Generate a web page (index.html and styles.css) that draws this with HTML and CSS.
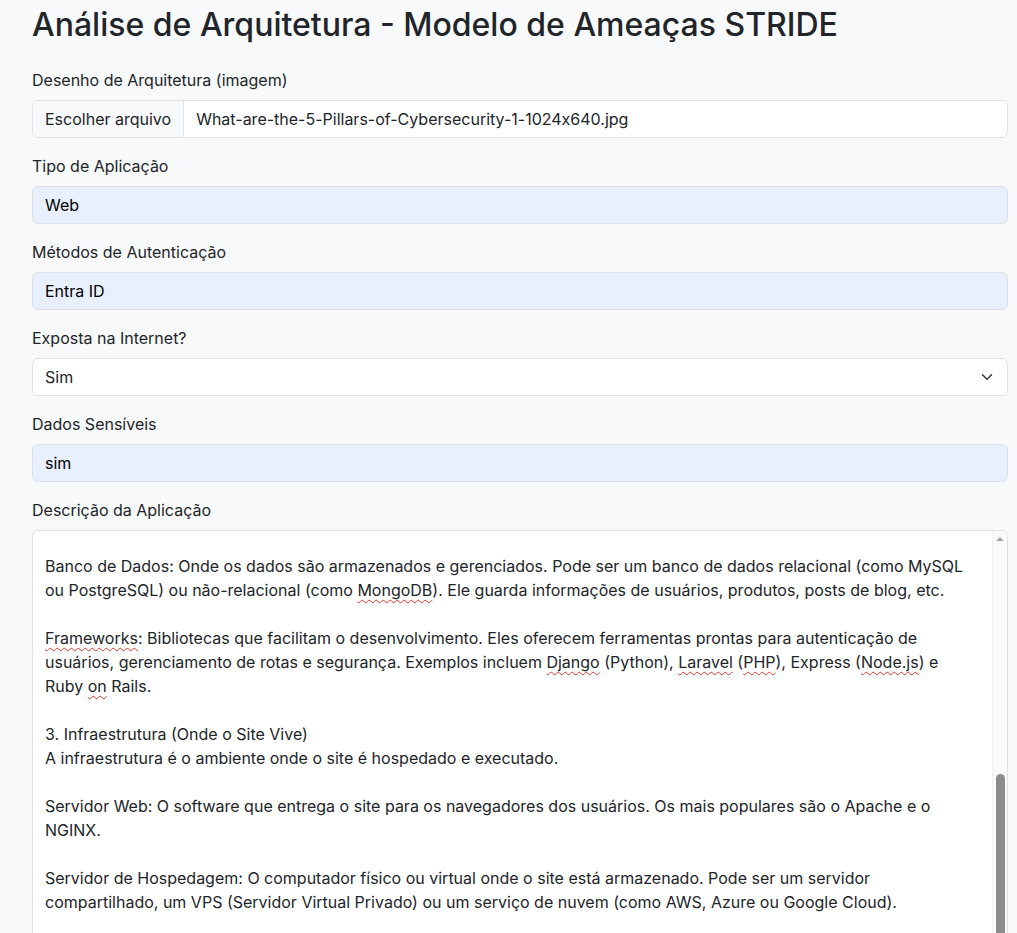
FILE: index.html
```html
<!DOCTYPE html>
<html lang="pt-BR">
<head>
<meta charset="utf-8">
<title>Análise de Arquitetura - Modelo de Ameaças STRIDE</title>
<link rel="stylesheet" href="styles.css">
</head>
<body>
<main class="page">
  <h1 class="title">Análise de Arquitetura - Modelo de Ameaças STRIDE</h1>

  <div class="field">
    <label class="label">Desenho de Arquitetura (imagem)</label>
    <div class="control file">
      <span class="file-btn">Escolher arquivo</span>
      <span class="file-name">What-are-the-5-Pillars-of-Cybersecurity-1-1024x640.jpg</span>
    </div>
  </div>

  <div class="field">
    <label class="label">Tipo de Aplicação</label>
    <div class="control autofill">Web</div>
  </div>

  <div class="field">
    <label class="label">Métodos de Autenticação</label>
    <div class="control autofill">Entra ID</div>
  </div>

  <div class="field">
    <label class="label">Exposta na Internet?</label>
    <div class="control select">
      <span>Sim</span>
      <svg class="chev" width="16" height="12" viewBox="0 0 16 16" aria-hidden="true"><path d="m2 5 6 6 6-6" fill="none" stroke="#343a40" stroke-width="2" stroke-linecap="round" stroke-linejoin="round"/></svg>
    </div>
  </div>

  <div class="field">
    <label class="label">Dados Sensíveis</label>
    <div class="control autofill">sim</div>
  </div>

  <div class="field">
    <label class="label">Descrição da Aplicação</label>
    <div class="textarea">
      <div class="ta-text"><p class="ln">Banco de Dados: Onde os dados são armazenados e gerenciados. Pode ser um banco de dados relacional (como MySQL</p><p class="ln">ou PostgreSQL) ou não-relacional (como <span class="sp">MongoDB</span>). Ele guarda informações de usuários, produtos, posts de blog, etc.</p><p class="ln"> </p><p class="ln"><span class="sp">Frameworks</span>: Bibliotecas que facilitam o desenvolvimento. Eles oferecem ferramentas prontas para autenticação de</p><p class="ln">usuários, gerenciamento de rotas e segurança. Exemplos incluem <span class="sp">Django</span> (Python), <span class="sp">Laravel</span> (<span class="sp">PHP</span>), Express (<span class="sp">Node.js</span>) e</p><p class="ln">Ruby <span class="sp">on</span> Rails.</p><p class="ln"> </p><p class="ln">3. Infraestrutura (Onde o Site Vive)</p><p class="ln">A infraestrutura é o ambiente onde o site é hospedado e executado.</p><p class="ln"> </p><p class="ln">Servidor Web: O software que entrega o site para os navegadores dos usuários. Os mais populares são o Apache e o</p><p class="ln">NGINX.</p><p class="ln"> </p><p class="ln">Servidor de Hospedagem: O computador físico ou virtual onde o site está armazenado. Pode ser um servidor</p><p class="ln">compartilhado, um VPS (Servidor Virtual Privado) ou um serviço de nuvem (como AWS, Azure ou Google Cloud).</p></div>
      <div class="scrollbar">
        <span class="arrow"></span>
        <span class="thumb"></span>
      </div>
    </div>
  </div>
</main>
</body>
</html>
```

FILE: styles.css
```css
* { box-sizing: border-box; }

html, body {
  margin: 0;
  padding: 0;
  background: #f8f9fa;
  overflow: hidden;
}

body {
  font-family: Inter, "Noto Sans", sans-serif;
  font-size: 16px;
  line-height: 24px;
  color: #212529;
}

.page {
  width: 976px;
  margin-left: 32px;
  height: 933px;
  overflow: hidden;
  padding-top: 5px;
}

.title {
  margin: 0 0 24px;
  font-size: 32px;
  line-height: 39px;
  font-weight: 500;
}

.field {
  margin-bottom: 16px;
}

.label {
  display: block;
  margin-bottom: 8px;
}

.control {
  height: 38px;
  border: 1px solid #dee2e6;
  border-radius: 6px;
  background: #fff;
  padding: 6px 12px;
  display: flex;
  align-items: center;
}

.autofill {
  background: #e8f0fe;
  color: #000;
}

.file {
  padding: 0;
  overflow: hidden;
}

.file-btn {
  height: 100%;
  display: flex;
  align-items: center;
  padding: 0 12px;
  background: #f8f9fa;
  border-right: 1px solid #dee2e6;
  margin-right: 12px;
}

.file-name {
  font-feature-settings: "calt" 0;
}

.select {
  justify-content: space-between;
}

.chev {
  display: block;
}

.textarea {
  display: flex;
  height: 500px;
  border: 1px solid #dee2e6;
  border-radius: 6px;
  background: #fff;
  overflow: hidden;
}

.ta-text {
  flex: 1;
  padding: 23px 12px 6px;
  overflow: hidden;
}

.ln {
  margin: 0;
  height: 24px;
  white-space: pre;
}

.sp {
  text-decoration: underline wavy #e8332a;
  text-decoration-thickness: 1px;
  text-underline-offset: 3px;
  text-decoration-skip-ink: none;
}

.scrollbar {
  width: 15px;
  flex: none;
  background: #fafafa;
  border-left: 1px solid #f0f0f0;
  display: flex;
  flex-direction: column;
  align-items: center;
}

.arrow {
  margin-top: 6px;
  width: 0;
  height: 0;
  border-left: 4px solid transparent;
  border-right: 4px solid transparent;
  border-bottom: 4px solid #a3a3a3;
}

.thumb {
  margin-top: 233px;
  width: 9px;
  height: 300px;
  border-radius: 5px;
  background: #8c8c8c;
}
```
